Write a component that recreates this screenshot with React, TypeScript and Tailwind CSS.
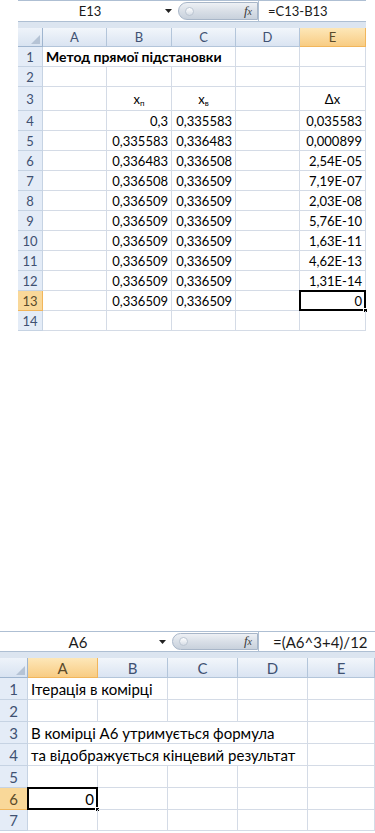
import React from "react";

type Cell = { text?: React.ReactNode; span?: number; align?: "left" | "right" | "center"; bold?: boolean; selected?: boolean };
type Row = { label: string; h: number; cells: Cell[]; active?: boolean };

const GRID = "border-[#d4dbe6]";

function FormulaBar({ name, formula, nameW, pillW, inputPad, barH }: { name: string; formula: string; nameW: string; pillW: string; inputPad: string; barH: string }) {
  return (
    <div className="flex flex-col">
      <div className={`flex ${barH} items-stretch border-y border-[#aebfd3] bg-white`}>
        <div className={`${nameW} flex items-center justify-center text-[#1b1b1b]`}>{name}</div>
        <div className="flex w-[12px] items-center justify-center">
          <svg width="7" height="4" viewBox="0 0 7 4">
            <path d="M0 0h7L3.5 4z" fill="#222" />
          </svg>
        </div>
        <div className={`${pillW} my-[1px] ml-[4px] flex items-center justify-between rounded-l-full border border-[#a8b6c8] bg-gradient-to-b from-[#eef1f5] via-[#d9dfe7] to-[#c8d1dc] pl-[6px] pr-[5px]`}>
          <span className="h-[9px] w-[9px] rounded-full border border-[#bcc6d2] bg-gradient-to-b from-white to-[#d6dde6]" />
          <span className="font-['Liberation_Serif',serif] text-[13px] italic text-[#3a3a3a]">
            f<span className="text-[10px]">x</span>
          </span>
        </div>
        <div className={`flex flex-1 items-center border-l border-[#aebfd3] ${inputPad} text-[#1b1b1b]`}>{formula}</div>
      </div>
      <div className="h-[6px] bg-[#dce5f0]" />
    </div>
  );
}

function Corner() {
  return (
    <div className="relative border-r border-b border-[#9fb5cf] bg-gradient-to-b from-[#eef3fa] to-[#d8e3f1]">
      <svg className="absolute right-[2px] bottom-[2px]" width="9" height="9" viewBox="0 0 9 9">
        <path d="M9 0V9H0z" fill="#b5c3d5" />
      </svg>
    </div>
  );
}

function ColHead({ label, active }: { label: string; active?: boolean }) {
  return (
    <div
      className={`flex items-center justify-center border-r border-b ${
        active
          ? "border-[#f1b65c] bg-gradient-to-b from-[#fde7b8] to-[#f8cc83] text-[#5a4a2a]"
          : "border-[#b3c5da] bg-gradient-to-b from-[#f2f6fb] to-[#dae4f2] text-[#3f5172]"
      }`}
    >
      {label}
    </div>
  );
}

function Sheet({ cols, rows, active }: { cols: string; rows: Row[]; active: string }) {
  const letters = ["A", "B", "C", "D", "E"];
  return (
    <div className={`grid ${cols}`}>
      <Corner />
      {letters.map((l) => (
        <ColHead key={l} label={l} active={l === active} />
      ))}
      {rows.map((r) => (
        <React.Fragment key={r.label}>
          <div
            style={{ height: r.h }}
            className={`flex items-center justify-center border-r border-b ${
              r.active
                ? "border-[#f1b65c] bg-[#f9d899] text-[#5a4a2a]"
                : "border-[#c6d3e3] bg-[#e4ecf7] text-[#3f5172]"
            }`}
          >
            {r.label}
          </div>
          {r.cells.map((c, i) => (
            <div
              key={i}
              style={{ gridColumn: c.span ? `span ${c.span} / span ${c.span}` : undefined }}
              className={`relative flex items-center whitespace-nowrap border-r border-b ${GRID} px-[3px] text-black ${
                c.align === "right" ? "justify-end" : c.align === "center" ? "justify-center" : "justify-start"
              } ${c.bold ? "text-[14px] font-bold" : ""}`}
            >
              {c.text}
              {c.selected && (
                <>
                  <span className="absolute -top-[1px] -left-[1px] -right-[1px] -bottom-[1px] border-2 border-black" />
                  <span className="absolute -right-[3px] -bottom-[3px] h-[5px] w-[5px] border border-white bg-black" />
                </>
              )}
            </div>
          ))}
        </React.Fragment>
      ))}
    </div>
  );
}

const R = (t: string): Cell => ({ text: t, align: "right" });
const E: Cell = {};

const topData: [string, string, string][] = [
  ["0,3", "0,335583", "0,035583"],
  ["0,335583", "0,336483", "0,000899"],
  ["0,336483", "0,336508", "2,54E-05"],
  ["0,336508", "0,336509", "7,19E-07"],
  ["0,336509", "0,336509", "2,03E-08"],
  ["0,336509", "0,336509", "5,76E-10"],
  ["0,336509", "0,336509", "1,63E-11"],
  ["0,336509", "0,336509", "4,62E-13"],
  ["0,336509", "0,336509", "1,31E-14"],
  ["0,336509", "0,336509", "0"],
];

const topRows: Row[] = [
  { label: "1", h: 20, cells: [{ text: "Метод прямої підстановки", span: 3, bold: true }, E, E] },
  { label: "2", h: 20, cells: [E, E, E, E, E] },
  {
    label: "3",
    h: 24,
    cells: [
      E,
      { text: <span>x<sub className="text-[8px]">п</sub></span>, align: "center" },
      { text: <span>x<sub className="text-[8px]">в</sub></span>, align: "center" },
      E,
      { text: "Δx", align: "center" },
    ],
  },
  ...topData.map(([b, c, e], i) => ({
    label: String(i + 4),
    h: 20,
    active: i === 9,
    cells: [E, R(b), R(c), E, { ...R(e), selected: i === 9 }],
  })),
  { label: "14", h: 20, cells: [E, E, E, E, E] },
];

const bottomRows: Row[] = [
  { label: "1", h: 22, cells: [{ text: "Ітерація в комірці", span: 2 }, E, E, E] },
  { label: "2", h: 22, cells: [E, E, E, E, E] },
  { label: "3", h: 22, cells: [{ text: "В комірці А6 утримується формула", span: 4 }, E] },
  { label: "4", h: 22, cells: [{ text: "та відображується кінцевий результат", span: 4 }, E] },
  { label: "5", h: 22, cells: [E, E, E, E, E] },
  { label: "6", h: 22, active: true, cells: [{ text: "0", align: "right", selected: true }, E, E, E, E] },
  { label: "7", h: 21, cells: [E, E, E, E, E] },
];

export default function App() {
  return (
    <div className="flex h-[833px] w-[375px] flex-col overflow-hidden bg-white font-['Lato',sans-serif]">
      <div className="ml-[18px] w-[348px] shrink-0 text-[13px] leading-[16px]">
        <FormulaBar name="E13" formula="=C13-B13" nameW="w-[144px]" pillW="w-[80px]" inputPad="pl-[9px]" barH="h-[22px]" />
        <Sheet cols="grid-cols-[25px_64px_65px_64px_64px_66px] grid-rows-[19px]" rows={topRows} active="E" />
      </div>
      <div className="mt-[300px] w-[375px] shrink-0 text-[15px] leading-[18px]">
        <FormulaBar name="A6" formula="=(A6^3+4)/12" nameW="w-[156px]" pillW="w-[86px]" inputPad="pl-[14px]" barH="h-[21px]" />
        <Sheet cols="grid-cols-[28px_70px_70px_70px_70px_67px] grid-rows-[20px]" rows={bottomRows} active="A" />
      </div>
    </div>
  );
}
